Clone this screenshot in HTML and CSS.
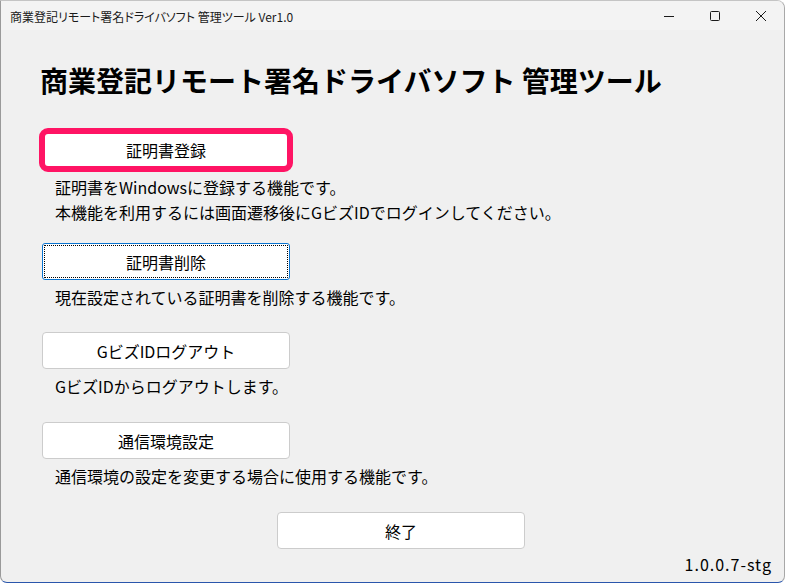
FILE: index.html
```html
<!DOCTYPE html>
<html lang="ja">
<head>
<meta charset="utf-8">
<title>管理ツール</title>
<link rel="stylesheet" href="styles.css">
</head>
<body>
<div class="window">
  <div class="titlebar">
    <div class="title">商業登記リモート署名ドライバソフト 管理ツール Ver1.0</div>
    <div class="controls">
      <div class="ctl"><svg width="12" height="12" viewBox="0 0 12 12"><path d="M1 6.5H11" stroke="#1a1a1a" stroke-width="1"/></svg></div>
      <div class="ctl"><svg width="12" height="12" viewBox="0 0 12 12"><rect x="1.5" y="1.5" width="9" height="9" rx="1" fill="none" stroke="#1a1a1a" stroke-width="1"/></svg></div>
      <div class="ctl"><svg width="12" height="12" viewBox="0 0 12 12"><path d="M1 1L11 11M11 1L1 11" stroke="#1a1a1a" stroke-width="1"/></svg></div>
    </div>
  </div>
  <div class="content">
    <h1 class="heading">商業登記リモート署名ドライバソフト 管理ツール</h1>

    <div class="btn btn-highlight">証明書登録</div>
    <p class="desc desc-first">証明書をWindowsに登録する機能です。<br>本機能を利用するには画面遷移後にGビズIDでログインしてください。</p>

    <div class="btn btn-focus btn-2">証明書削除</div>
    <p class="desc">現在設定されている証明書を削除する機能です。</p>

    <div class="btn btn-3">GビズIDログアウト</div>
    <p class="desc">GビズIDからログアウトします。</p>

    <div class="btn btn-next">通信環境設定</div>
    <p class="desc">通信環境の設定を変更する場合に使用する機能です。</p>

    <div class="btn btn-next btn-exit">終了</div>
    <div class="version">1.0.0.7-stg</div>
  </div>
</div>
</body>
</html>
```
FILE: styles.css
```css
html, body {
  margin: 0;
  padding: 0;
  background: #ffffff;
}
body {
  font-family: "Noto Sans CJK JP", "Noto Sans", sans-serif;
  color: #000;
}
.window {
  box-sizing: border-box;
  width: 785px;
  height: 583px;
  background: #f0f0f0;
  border-left: 1px solid #9a9a9a;
  border-right: 1px solid #a8a8a8;
  border-top: 1px solid #c4c4c4;
  border-bottom: 1px solid #2a56ac;
  border-top-right-radius: 8px;
  border-bottom-left-radius: 7px;
  border-bottom-right-radius: 7px;
  overflow: hidden;
  display: flex;
  flex-direction: column;
}
.titlebar {
  height: 29px;
  background: #f3f3f3;
  display: flex;
  align-items: center;
  justify-content: space-between;
  flex-shrink: 0;
}
.title {
  padding-left: 9px;
  font-size: 12px;
  font-feature-settings: "palt";
  color: #1a1a1a;
  white-space: nowrap;
  padding-top: 1px;
}
.controls {
  display: flex;
  height: 100%;
}
.ctl {
  width: 46px;
  height: 100%;
  display: flex;
  align-items: center;
  justify-content: center;
}
.content {
  flex: 1;
  padding: 32px 13px 0 39px;
  display: flex;
  flex-direction: column;
  align-items: flex-start;
}
.heading {
  margin: 0;
  font-size: 28px;
  line-height: 36px;
  font-weight: bold;
  white-space: nowrap;
}
.btn {
  box-sizing: border-box;
  background: #fff;
  display: flex;
  align-items: center;
  justify-content: center;
  font-size: 16px;
  border: 1px solid #cccccc;
  border-radius: 4px;
  width: 248px;
  height: 37px;
  margin-left: 2px;
}
.btn-highlight {
  width: 254px;
  height: 44px;
  margin-left: -1px;
  margin-top: 30px;
  border: 6px solid #ff1464;
  border-radius: 9px;
}
.btn-focus {
  border: 1px solid #0a74d0;
  border-radius: 3px;
  outline: 1px dotted #000;
  outline-offset: -3px;
}
.btn-2 {
  margin-top: 18px;
}
.btn-3 {
  margin-top: 22px;
}
.btn-next {
  margin-top: 23px;
}
.btn-exit {
  margin-left: 237px;
}
.desc {
  margin: 5px 0 0 0;
  padding-left: 15px;
  font-size: 16px;
  line-height: 25px;
  white-space: nowrap;
}
.desc-first {
  margin-top: 3px;
}
.version {
  align-self: flex-end;
  margin-top: 3px;
  font-size: 16px;
  line-height: 25px;
  letter-spacing: 1px;
  margin-right: -1px;
}
```
